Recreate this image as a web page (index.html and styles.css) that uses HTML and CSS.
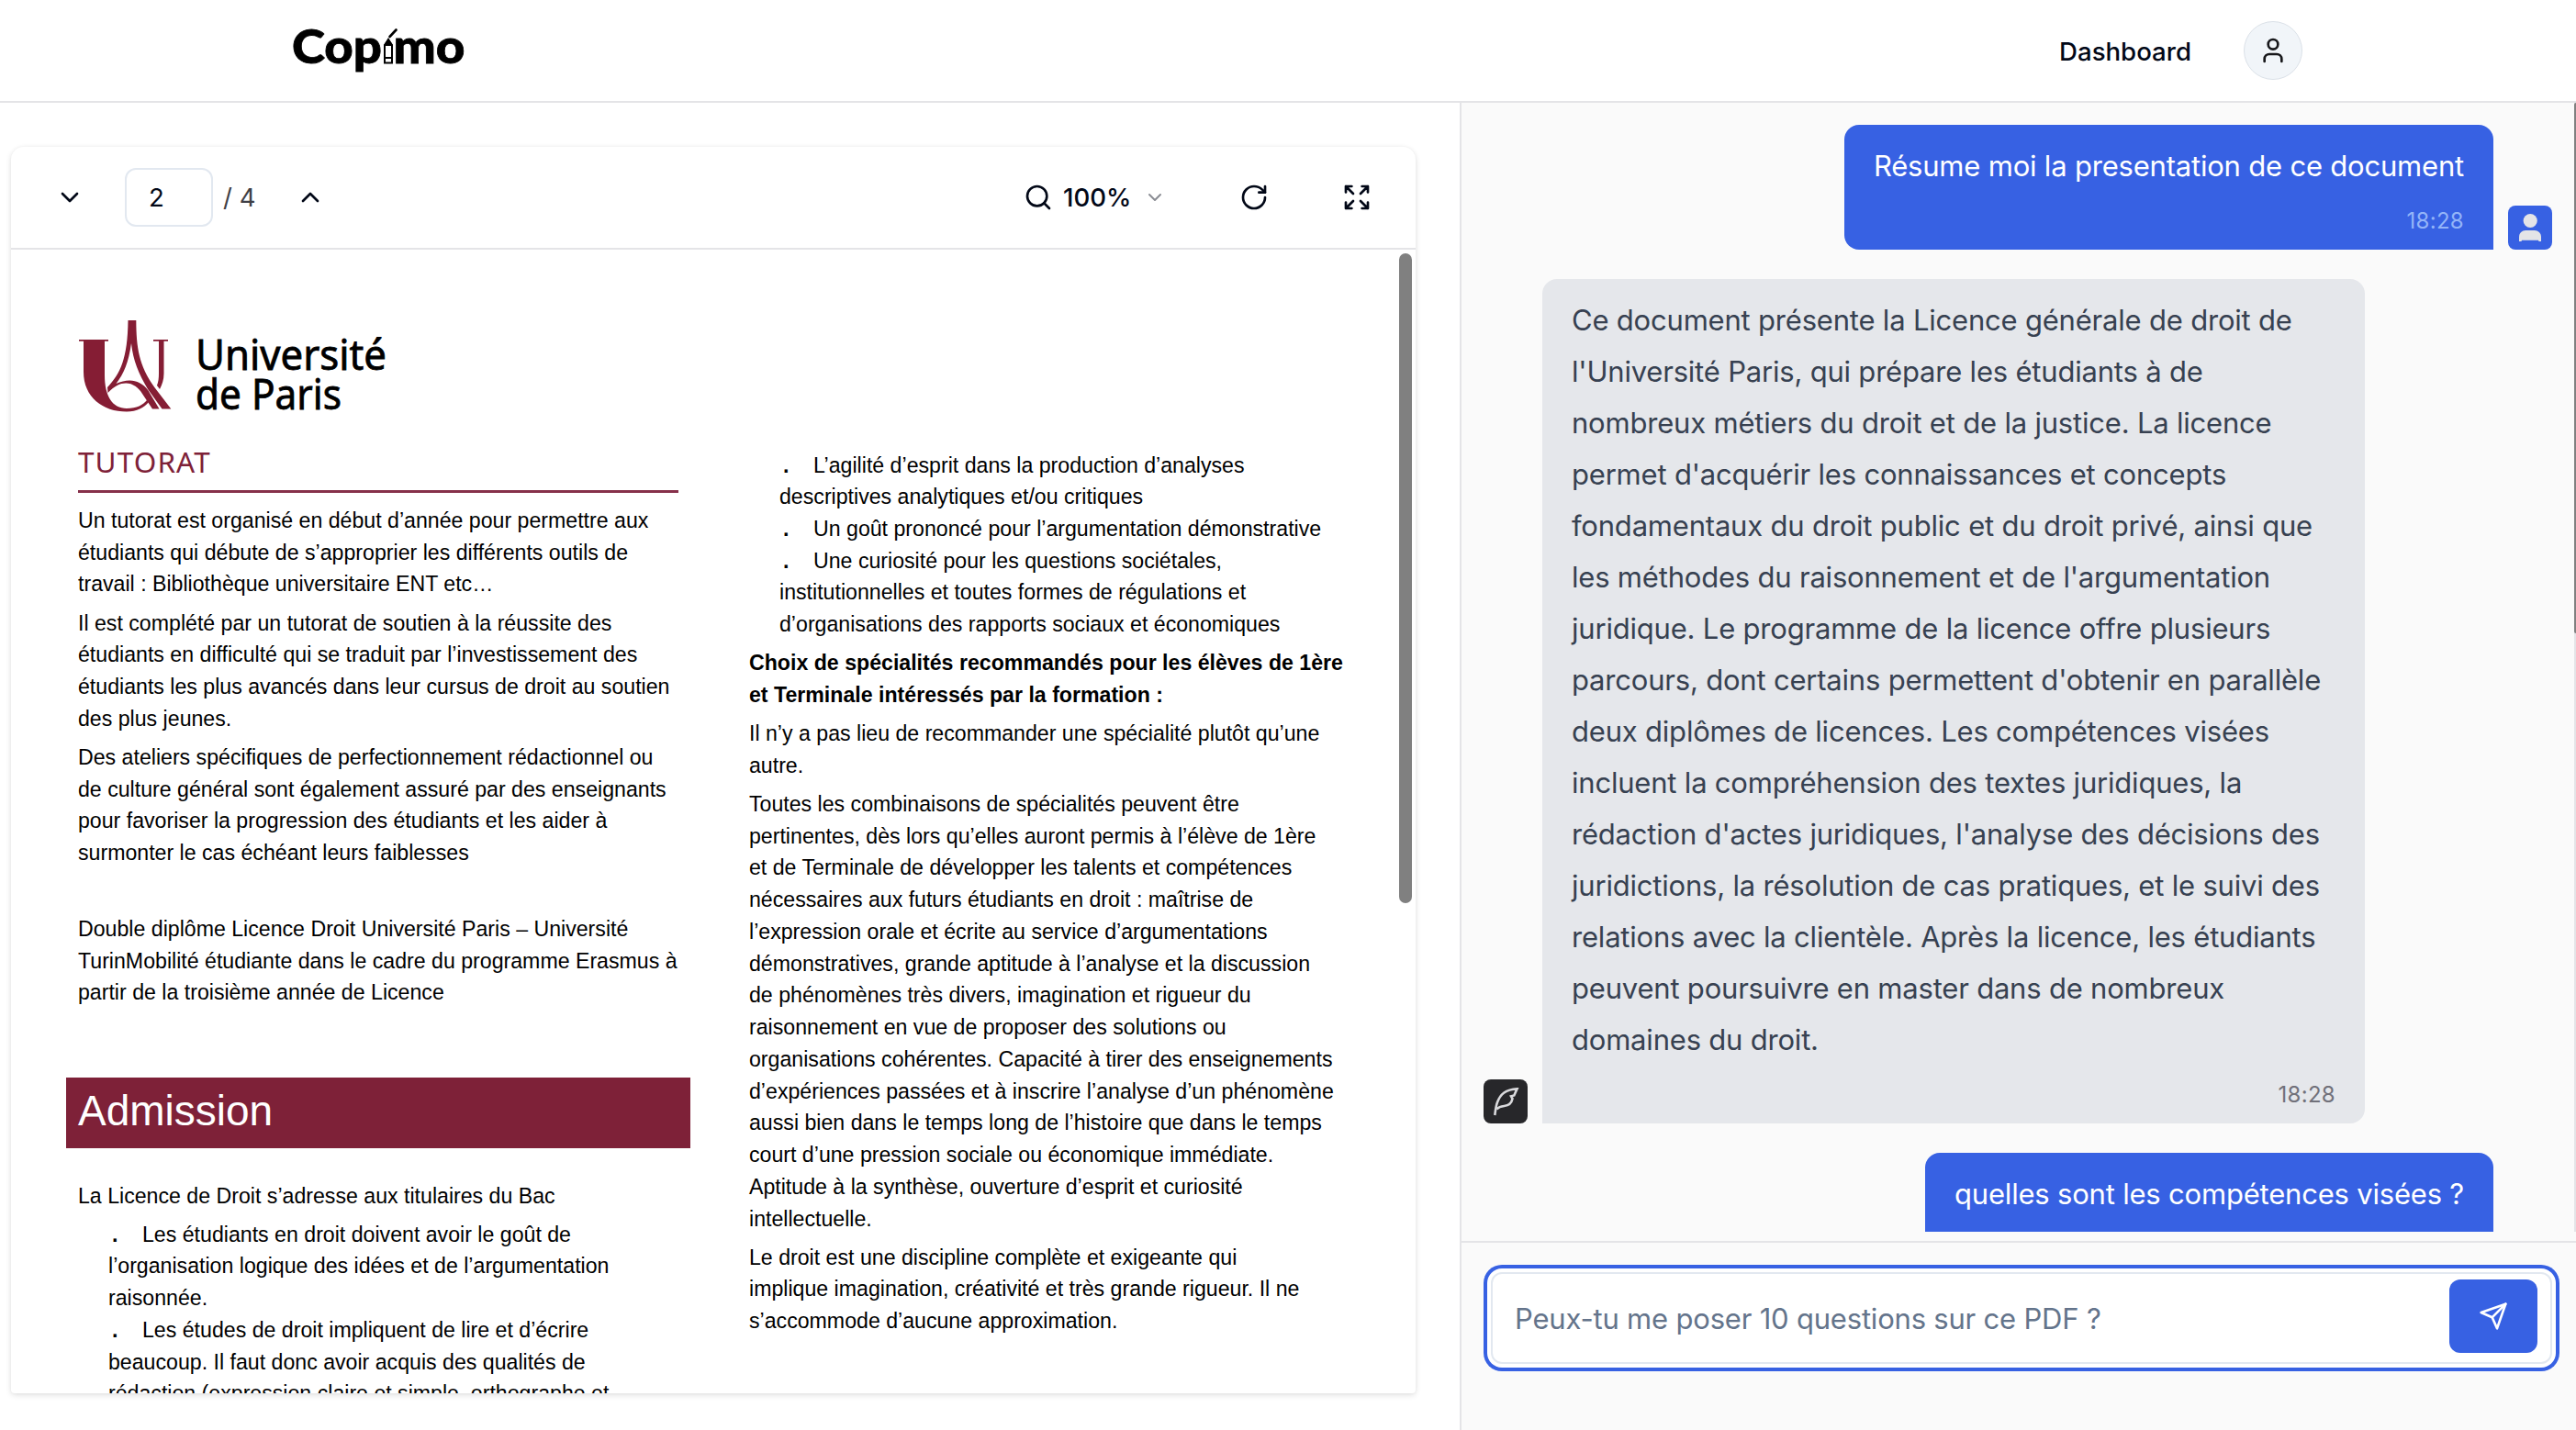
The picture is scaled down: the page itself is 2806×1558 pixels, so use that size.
FILE: index.html
```html
<!DOCTYPE html>
<html lang="fr">
<head>
<meta charset="utf-8">
<title>Copimo</title>
<link rel="stylesheet" href="styles.css">
</head>
<body>
<header class="topbar">
  <svg class="brand" viewBox="0 0 200 70" role="img" aria-label="Copimo">
    <g class="brand-word">
      <text x="0" y="51.300" textLength="98" lengthAdjust="spacingAndGlyphs">Cop</text>
      <text x="110.500" y="51.300" textLength="78" lengthAdjust="spacingAndGlyphs">mo</text>
    </g>
    <g fill="none" stroke="#000" stroke-width="2">
      <path d="M101 50.500V31L105 25.500l4 5.500V50.500zM101 45h8M101 31h8"/>
      <path d="M102 30l3-5 3 5z" fill="#000"/>
      <path d="M106.500 22l7-7.500" stroke-width="2.600" stroke-linecap="round"/>
    </g>
  </svg>
  <nav class="topnav">
    <a class="navlink">Dashboard</a>
    <span class="account">
      <svg class="icon" viewBox="0 0 24 24"><path d="M19 21v-2a4 4 0 0 0-4-4H9a4 4 0 0 0-4 4v2"/><circle cx="12" cy="7" r="4"/></svg>
    </span>
  </nav>
</header>
<main class="workspace">
  <section class="viewer">
    <div class="card">
      <div class="toolbar">
        <div class="pager">
          <svg class="icon" viewBox="0 0 24 24"><path d="m6 9 6 6 6-6"/></svg>
          <span class="page-input">2</span>
          <span class="page-total">/ 4</span>
          <svg class="icon" viewBox="0 0 24 24"><path d="m18 15-6-6-6 6"/></svg>
        </div>
        <div class="tools">
          <svg class="icon" viewBox="0 0 24 24"><circle cx="11" cy="11" r="8"/><path d="m21 21-4.300-4.300"/></svg>
          <span class="zoom">100%</span>
          <svg class="icon small" viewBox="0 0 24 24"><path d="m6 9 6 6 6-6"/></svg>
          <svg class="icon rotate" viewBox="0 0 24 24"><path d="M21 12a9 9 0 1 1-9-9c2.520 0 4.930 1 6.740 2.740L21 8"/><path d="M21 3v5h-5"/></svg>
          <svg class="icon expand" viewBox="0 0 24 24"><path d="m21 21-6-6m6 6v-4.800m0 4.800h-4.800"/><path d="M3 16.200V21m0 0h4.800M3 21l6-6"/><path d="M21 7.800V3m0 0h-4.800M21 3l-6 6"/><path d="M3 7.800V3m0 0h4.800M3 3l6 6"/></svg>
        </div>
      </div>
      <div class="page">
        <div class="col col-left">
          <svg class="univ" viewBox="0 0 340 100" role="img" aria-label="Université de Paris">
            <g fill="#851d34">
              <path d="M1 21h32v1.800h-4V60c0 22 8 36 24 36 11 0 18-4 22-9l2 2c-5 6-13 10.500-24 10.500C27 99.500 6 84 6 56V22.800H1z"/>
              <path d="M82 21h16v1.800h-4.500V58c0 7-2 12-4.500 17l-3-4c1.500-4 2-8 2-13V22.800h-6z"/>
              <path d="M54.500 0h8.800c.200 30 3 49 20 73l18 23.500H91.500L76 75C66 58 60 44 58 25 55 46 50 58 41.500 69c13-6 26-5 35 7.500L88.500 96.500H81L70 80C63 68 48 62 32.500 79L32 73C46 58 54 42 54.500 0z"/>
            </g>
            <g class="univ-word">
              <text x="128" y="54" textLength="208" lengthAdjust="spacingAndGlyphs">Université</text>
              <text x="128" y="96.500" textLength="159" lengthAdjust="spacingAndGlyphs">de Paris</text>
            </g>
          </svg>
          <h2 class="section">TUTORAT</h2>
          <p>Un tutorat est organisé en début d’année pour permettre aux<br>étudiants qui débute de s’approprier les différents outils de<br>travail : Bibliothèque universitaire ENT etc…</p>
          <p>Il est complété par un tutorat de soutien à la réussite des<br>étudiants en difficulté qui se traduit par l’investissement des<br>étudiants les plus avancés dans leur cursus de droit au soutien<br>des plus jeunes.</p>
          <p>Des ateliers spécifiques de perfectionnement rédactionnel ou<br>de culture général sont également assuré par des enseignants<br>pour favoriser la progression des étudiants et les aider à<br>surmonter le cas échéant leurs faiblesses</p>
          <p class="spaced">Double diplôme Licence Droit Université Paris – Université<br>TurinMobilité étudiante dans le cadre du programme Erasmus à<br>partir de la troisième année de Licence</p>
          <h1 class="banner">Admission</h1>
          <p>La Licence de Droit s’adresse aux titulaires du Bac</p>
          <ul>
            <li>Les étudiants en droit doivent avoir le goût de<br>l’organisation logique des idées et de l’argumentation<br>raisonnée.</li>
            <li>Les études de droit impliquent de lire et d’écrire<br>beaucoup. Il faut donc avoir acquis des qualités de<br>rédaction (expression claire et simple, orthographe et</li>
          </ul>
        </div>
        <div class="col col-right">
          <ul>
            <li>L’agilité d’esprit dans la production d’analyses<br>descriptives analytiques et/ou critiques</li>
            <li>Un goût prononcé pour l’argumentation démonstrative</li>
            <li>Une curiosité pour les questions sociétales,<br>institutionnelles et toutes formes de régulations et<br>d’organisations des rapports sociaux et économiques</li>
          </ul>
          <p class="strong">Choix de spécialités recommandés pour les élèves de 1ère<br>et Terminale intéressés par la formation :</p>
          <p>Il n’y a pas lieu de recommander une spécialité plutôt qu’une<br>autre.</p>
          <p>Toutes les combinaisons de spécialités peuvent être<br>pertinentes, dès lors qu’elles auront permis à l’élève de 1ère<br>et de Terminale de développer les talents et compétences<br>nécessaires aux futurs étudiants en droit : maîtrise de<br>l’expression orale et écrite au service d’argumentations<br>démonstratives, grande aptitude à l’analyse et la discussion<br>de phénomènes très divers, imagination et rigueur du<br>raisonnement en vue de proposer des solutions ou<br>organisations cohérentes. Capacité à tirer des enseignements<br>d’expériences passées et à inscrire l’analyse d’un phénomène<br>aussi bien dans le temps long de l’histoire que dans le temps<br>court d’une pression sociale ou économique immédiate.<br>Aptitude à la synthèse, ouverture d’esprit et curiosité<br>intellectuelle.</p>
          <p>Le droit est une discipline complète et exigeante qui<br>implique imagination, créativité et très grande rigueur. Il ne<br>s’accommode d’aucune approximation.</p>
        </div>
        <span class="page-thumb"></span>
      </div>
    </div>
  </section>
  <section class="chat">
    <div class="messages">
      <div class="row mine">
        <div class="bubble"><p>Résume moi la presentation de ce document</p><time>18:28</time></div>
        <span class="avatar user"><svg viewBox="0 0 48 48" fill="#e4e4e7"><circle cx="24.200" cy="16.500" r="7.600"/><path d="M12 39v-5a7 7 0 0 1 7-7h10a7 7 0 0 1 7 7v5h-2.500l-.500-1.200H15L14.500 39z"/></svg></span>
      </div>
      <div class="row theirs">
        <span class="avatar bot"><svg viewBox="0 0 48 48" fill="none" stroke="#d9d9dc" stroke-width="2.600"><path d="M12.300 39C13 33 13.500 29 15 25 18.500 16 24 11 36.500 10.300L33.300 17.500 30 18.300 31.500 21C30.500 26 27 28.500 22.500 29 19.500 29.300 16.500 30 14.500 32.500"/></svg></span>
        <div class="bubble"><p>Ce document présente la Licence générale de droit de<br>l'Université Paris, qui prépare les étudiants à de<br>nombreux métiers du droit et de la justice. La licence<br>permet d'acquérir les connaissances et concepts<br>fondamentaux du droit public et du droit privé, ainsi que<br>les méthodes du raisonnement et de l'argumentation<br>juridique. Le programme de la licence offre plusieurs<br>parcours, dont certains permettent d'obtenir en parallèle<br>deux diplômes de licences. Les compétences visées<br>incluent la compréhension des textes juridiques, la<br>rédaction d'actes juridiques, l'analyse des décisions des<br>juridictions, la résolution de cas pratiques, et le suivi des<br>relations avec la clientèle. Après la licence, les étudiants<br>peuvent poursuivre en master dans de nombreux<br>domaines du droit.</p><time>18:28</time></div>
      </div>
      <div class="row mine">
        <div class="bubble"><p>quelles sont les compétences visées ?</p><time>18:28</time></div>
        <span class="avatar user"></span>
      </div>
      <span class="chat-track"><span class="chat-thumb"></span></span>
    </div>
    <div class="composer">
      <div class="prompt">
        <span class="placeholder">Peux-tu me poser 10 questions sur ce PDF ?</span>
        <button class="send" aria-label="Envoyer"><svg class="icon" viewBox="0 0 24 24"><path d="m22 2-7 20-4-9-9-4Z"/><path d="M22 2 11 13"/></svg></button>
      </div>
    </div>
  </section>
</main>
</body>
</html>
```
FILE: styles.css
```css
* { box-sizing: border-box; margin: 0; padding: 0; }
body {
  width: 2806px; height: 1558px; overflow: hidden;
  display: flex; flex-direction: column;
  background: #fff; color: #020817;
  font-family: Inter, "Liberation Sans", sans-serif; font-size: 27.600px;
}
.icon {
  width: 32px; height: 32px; flex: none;
  fill: none; stroke: currentColor; stroke-width: 2;
  stroke-linecap: round; stroke-linejoin: round;
}

/* top bar */
.topbar {
  height: 112px; flex: none; display: flex; justify-content: space-between;
  padding: 0 298px 0 318px; border-bottom: 2px solid #e4e4e7;
}
.brand { width: 200px; height: 70px; margin-top: 18px; overflow: visible; }
.brand-word { font: 900 51px Lato, sans-serif; stroke: #000; stroke-width: .8px; }
.topnav { display: flex; align-items: center; gap: 57px; }
.navlink { font-weight: 500; margin-top: 1px; }
.account {
  width: 64px; height: 64px; border-radius: 50%; background: #f1f5f9;
  border: 1px solid #dbe1e8; color: #18181b;
  display: flex; align-items: center; justify-content: center;
}

.workspace { flex: 1; min-height: 0; display: flex; }

/* document viewer */
.viewer { width: 1590px; flex: none; padding: 48px 48px 40px 12px; }
.card {
  height: 1358px; display: flex; flex-direction: column; overflow: hidden;
  background: #fff; border-radius: 14px 14px 4px 4px;
  box-shadow: 0 2px 6px rgba(0,0,0,.12), 0 0 4px rgba(0,0,0,.03);
}
.toolbar {
  height: 112px; flex: none; display: flex; align-items: center; justify-content: space-between;
  padding: 0 48px; border-bottom: 2px solid #e4e4e7;
}
.pager, .tools { display: flex; align-items: center; }
.page-input {
  width: 96px; height: 64px; margin-left: 44px; padding-left: 24px;
  border: 2px solid #e2e8f0; border-radius: 12px; line-height: 61px;
}
.page-total { width: 79px; margin-left: 11px; color: #3f3f46; }
.zoom { width: 88px; margin-left: 11px; font-weight: 500; }
.small { width: 24px; height: 24px; color: #8b8d94; }
.rotate { margin-left: 80px; }
.expand { margin-left: 80px; }

.page {
  flex: 1; min-height: 0; position: relative; overflow: hidden;
  display: flex; gap: 64px; padding-left: 60px;
  color: #000; font: 23.150px/34.740px "Liberation Sans", Arial, sans-serif; white-space: nowrap;
}
.col-left { width: 680px; flex: none; }
.col-left > * { margin-left: 13px; }
.univ { display: block; width: 340px; height: 100px; margin-top: 77px; overflow: visible; }
.univ-word { font-family: "Noto Sans", sans-serif; font-size: 45px; font-weight: 400; stroke: #000; stroke-width: .8px; }
.section {
  width: 654px; height: 56px; margin-top: 32px; margin-bottom: 13px;
  border-bottom: 3px solid #86304a; color: #7e2138;
  font: 400 31.500px/44px "Noto Sans", sans-serif; letter-spacing: 1.100px;
}
.col p { margin-bottom: 7.400px; }
.col .spaced { margin-top: 48px; }
.banner {
  height: 77px; margin: 75px 0 34.500px; padding-left: 13px;
  background: #7e2138; color: #fff; font-weight: 400; font-size: 46px; line-height: 72px;
}
.col-left > .banner { margin-left: 0; }
.col ul { list-style: none; padding-left: 33px; }
.col li::before {
  content: "."; display: inline-block; width: 33px; margin-left: 4px;
  font-weight: 700;
}
.col-right { padding-top: 217.500px; }
.strong { margin-top: 7.400px; font-weight: 700; }
.page-thumb {
  position: absolute; right: 4px; top: 4px; width: 14px; height: 708px;
  border-radius: 7px; background: #808080;
}

/* chat */
.chat {
  flex: 1; display: flex; flex-direction: column;
  border-left: 2px solid #e4e4e7; background: #fafafa;
}
.messages {
  position: relative; height: 1230px; flex: none; overflow: hidden;
  display: flex; flex-direction: column; gap: 32px; padding: 24px 26px 0 24px;
}
.row { display: flex; align-items: flex-end; gap: 16px; flex: none; }
.mine { justify-content: flex-end; }
.bubble {
  padding: 17px 32px 15px; display: flex; flex-direction: column; gap: 16px;
  font-size: 31px; line-height: 56px; letter-spacing: -.2px; white-space: nowrap;
}
.bubble time { align-self: flex-end; font-size: 24px; line-height: 32px; letter-spacing: .3px; }
.mine .bubble { background: #3761e3; color: #fff; border-radius: 16px 16px 0 16px; }
.mine .bubble time { color: #93b4f8; }
.theirs .bubble { width: 896px; background: #e5e7eb; color: #374151; border-radius: 16px 16px 16px 0; }
.theirs .bubble time { color: #71717a; }
.avatar { width: 48px; height: 48px; flex: none; border-radius: 8px; }
.avatar svg { display: block; }
.user { background: #3761e3; }
.bot { background: #27272a; }
.chat-track {
  position: absolute; right: 0; top: 0; width: 2px; height: 100%;
  background: #e4e4e7;
}
.chat-thumb { display: block; height: 578px; background: #808080; border-radius: 2px 0 0 2px; }
.composer { margin-top: 10px; flex: 1; padding: 32px 26px 0 32px; border-top: 2px solid #e4e4e7; }
.prompt {
  height: 100px; display: flex; align-items: center; justify-content: space-between;
  padding: 0 14px 4px 24px; background: #fff;
  border: 2px solid #e2e8f0; border-radius: 12px;
  box-shadow: 0 0 0 4px #fff, 0 0 0 8px #3761e3;
}
.placeholder { padding-top: 4px; font-size: 31px; letter-spacing: -.2px; color: #64748b; }
.send {
  width: 96px; height: 80px; border: 0; border-radius: 12px;
  background: #3761e3; color: #fff;
  display: flex; align-items: center; justify-content: center;
}
```
